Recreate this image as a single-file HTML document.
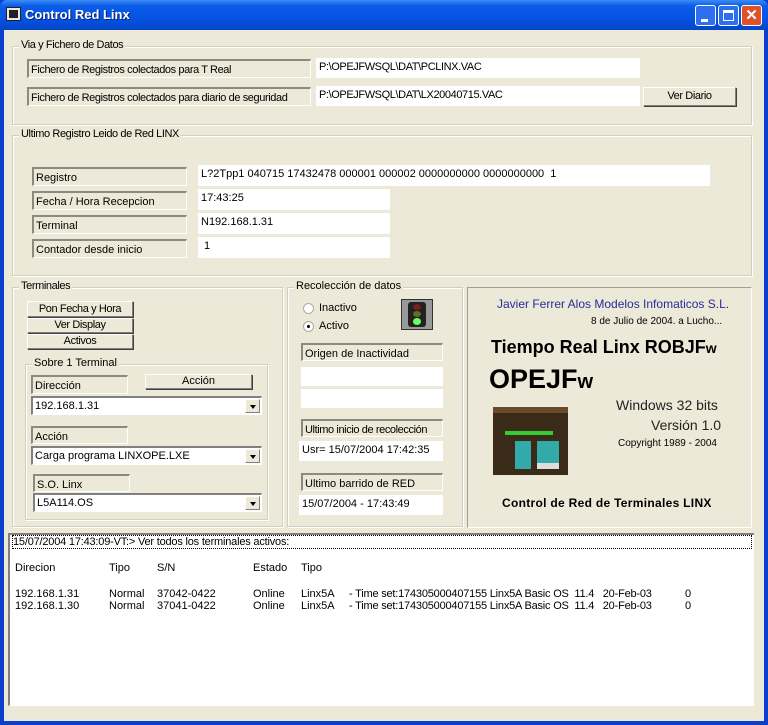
<!DOCTYPE html>
<html><head><meta charset="utf-8"><style>
*{box-sizing:border-box;margin:0;padding:0}
body{width:768px;height:725px;overflow:hidden;background:#0a3fcf;font-family:"Liberation Sans",sans-serif;font-size:11px;color:#000;position:relative}
.a{position:absolute;white-space:nowrap}
#tb{left:0;top:0;width:768px;height:30px;background:linear-gradient(#3c8cf5,#0a5ce8 20%,#0550e0 70%,#0347c4);border-radius:7px 7px 0 0}
#cl{left:4px;top:30px;width:760px;height:691px;background:#ece9d8}
.fr{position:absolute;border:1px solid #d0d0bf;box-shadow:inset 1px 1px 0 #fff,1px 1px 0 #fff}
.lg{position:absolute;background:#ece9d8;padding:0 2px;top:-8px;left:6px;color:#000;white-space:nowrap}
.lb{position:absolute;border-top:2px solid #8a8a80;border-left:2px solid #8a8a80;border-bottom:1px solid #fff;border-right:1px solid #fff;padding:2px 2px 0;line-height:14px;background:#ece9d8;white-space:nowrap;overflow:hidden}
.tx{position:absolute;background:#fff;padding:2px 3px;line-height:14px;white-space:nowrap;overflow:hidden}
.bt{position:absolute;background:#ece9d8;border:1px solid;border-color:#fff #808080 #808080 #fff;box-shadow:1px 1px 0 #404040;text-align:center;line-height:14px;white-space:nowrap}
.cb{position:absolute;background:#fff;border-top:2px solid #808080;border-left:2px solid #808080;border-bottom:1px solid #fff;border-right:1px solid #fff;padding:1px 2px;line-height:14px;white-space:nowrap}
.cb i{position:absolute;right:1px;top:1px;width:15px;height:14px;background:#ece9d8;border:1px solid;border-color:#fff #808080 #808080 #fff}
.cb i:after{content:"";position:absolute;left:4px;top:5px;border:3px solid transparent;border-top:4px solid #000;border-bottom:0}
.n{letter-spacing:-.4px}
</style></head><body>
<div id="tb" class="a"></div>
<div class="a" style="left:6px;top:7px;width:15px;height:14px;background:#e8e8e8;border:1px solid #222"><div style="margin:2px;width:9px;height:8px;background:#222"></div></div>
<div class="a" style="left:25px;top:7px;color:#fff;font-weight:bold;font-size:13px;text-shadow:1px 1px #0a246a">Control Red Linx</div>
<div class="a" style="left:695px;top:5px;width:21px;height:21px;border:1px solid #fff;border-radius:3px;background:#2d6ff0"><div style="position:absolute;left:5px;top:13px;width:7px;height:3px;background:#fff"></div></div>
<div class="a" style="left:718px;top:5px;width:21px;height:21px;border:1px solid #fff;border-radius:3px;background:#2d6ff0"><div style="position:absolute;left:4px;top:4px;width:11px;height:11px;border:1px solid #fff;border-top-width:3px"></div></div>
<div class="a" style="left:741px;top:5px;width:21px;height:21px;border:1px solid #fff;border-radius:3px;background:#e0502a;color:#fff;font-weight:bold;font-size:15px;text-align:center;line-height:19px">✕</div>
<div id="cl" class="a"></div>

<div class="fr" style="left:12px;top:46px;width:740px;height:79px"><span class="lg n">Via y Fichero de Datos</span></div>
<div class="lb n" style="left:27px;top:59px;width:284px;height:19px">Fichero de Registros colectados para T Real</div>
<div class="tx n" style="left:316px;top:58px;width:324px;height:20px">P:\OPEJFWSQL\DAT\PCLINX.VAC</div>
<div class="lb n" style="left:27px;top:87px;width:284px;height:19px">Fichero de Registros colectados para diario de seguridad</div>
<div class="tx n" style="left:316px;top:86px;width:324px;height:20px">P:\OPEJFWSQL\DAT\LX20040715.VAC</div>
<div class="bt n" style="left:643px;top:87px;width:93px;height:19px;line-height:17px">Ver Diario</div>

<div class="fr" style="left:12px;top:135px;width:740px;height:141px"><span class="lg n">Ultimo Registro Leido de Red LINX</span></div>
<div class="lb" style="left:32px;top:167px;width:155px;height:19px">Registro</div>
<div class="tx" style="left:198px;top:165px;width:512px;height:21px">L?2Tpp1 040715 17432478 000001 000002 0000000000 0000000000&nbsp; 1</div>
<div class="lb" style="left:32px;top:191px;width:155px;height:19px">Fecha / Hora Recepcion</div>
<div class="tx" style="left:198px;top:189px;width:192px;height:21px">17:43:25</div>
<div class="lb" style="left:32px;top:215px;width:155px;height:19px">Terminal</div>
<div class="tx" style="left:198px;top:213px;width:192px;height:21px">N192.168.1.31</div>
<div class="lb" style="left:32px;top:239px;width:155px;height:19px">Contador desde inicio</div>
<div class="tx" style="left:198px;top:237px;width:192px;height:21px">&nbsp;1</div>

<div class="fr" style="left:12px;top:287px;width:271px;height:240px"><span class="lg n">Terminales</span></div>
<div class="bt n" style="left:27px;top:301px;width:106px;height:16px">Pon Fecha y Hora</div>
<div class="bt n" style="left:27px;top:318px;width:106px;height:15px;line-height:13px">Ver Display</div>
<div class="bt n" style="left:27px;top:334px;width:106px;height:15px;line-height:13px">Activos</div>
<div class="fr" style="left:25px;top:364px;width:243px;height:156px"><span class="lg">Sobre 1 Terminal</span></div>
<div class="lb" style="left:31px;top:375px;width:97px;height:19px">Dirección</div>
<div class="bt" style="left:145px;top:374px;width:107px;height:15px;line-height:13px">Acción</div>
<div class="cb" style="left:31px;top:396px;width:231px;height:19px">192.168.1.31<i></i></div>
<div class="lb" style="left:31px;top:426px;width:97px;height:18px">Acción</div>
<div class="cb" style="left:31px;top:446px;width:231px;height:19px">Carga programa LINXOPE.LXE<i></i></div>
<div class="lb" style="left:33px;top:474px;width:97px;height:18px">S.O. Linx</div>
<div class="cb" style="left:33px;top:493px;width:229px;height:19px">L5A114.OS<i></i></div>

<div class="fr" style="left:287px;top:287px;width:176px;height:240px"><span class="lg">Recolección de datos</span></div>
<div class="a" style="left:303px;top:303px;width:11px;height:11px;border-radius:50%;background:#fff;border:1px solid #aaa"></div>
<div class="a" style="left:319px;top:302px">Inactivo</div>
<div class="a" style="left:303px;top:321px;width:11px;height:11px;border-radius:50%;background:#fff;border:1px solid #aaa"><div style="margin:3px;width:3px;height:3px;border-radius:50%;background:#000"></div></div>
<div class="a" style="left:319px;top:320px">Activo</div>
<div class="a" style="left:401px;top:299px;width:32px;height:31px;background:#999;border:1px solid #333;padding:2px 6px"><div style="width:18px;height:25px;background:#222;border-radius:3px;position:relative">
<div style="position:absolute;left:5px;top:2px;width:8px;height:6px;border-radius:50%;background:#7a2020"></div>
<div style="position:absolute;left:5px;top:9px;width:8px;height:6px;border-radius:50%;background:#6a6a20"></div>
<div style="position:absolute;left:5px;top:16px;width:8px;height:7px;border-radius:50%;background:#6f6"></div></div></div>
<div class="lb" style="left:301px;top:343px;width:142px;height:18px">Origen de Inactividad</div>
<div class="tx" style="left:301px;top:367px;width:142px;height:19px"></div>
<div class="tx" style="left:301px;top:389px;width:142px;height:19px"></div>
<div class="lb n" style="left:301px;top:419px;width:142px;height:18px">Ultimo inicio de recolección</div>
<div class="tx" style="left:299px;top:441px;width:144px;height:20px">Usr= 15/07/2004 17:42:35</div>
<div class="lb" style="left:301px;top:473px;width:142px;height:18px">Ultimo barrido de RED</div>
<div class="tx" style="left:299px;top:495px;width:144px;height:20px">15/07/2004 - 17:43:49</div>

<div class="a" style="left:467px;top:287px;width:285px;height:241px;border:1px solid;border-color:#a0a090 #fff #fff #a0a090"></div>
<div class="a" style="left:497px;top:297px;color:#2a2a9a;font-size:12px">Javier Ferrer Alos Modelos Infomaticos S.L.</div>
<div class="a" style="left:591px;top:316px;font-size:10px">8 de Julio de 2004. a Lucho...</div>
<div class="a" style="left:491px;top:337px;font-size:18px;font-weight:bold">Tiempo Real Linx ROBJF<span style="font-size:14px">w</span></div>
<div class="a" style="left:489px;top:364px;font-size:27px;font-weight:bold">OPEJF<span style="font-size:20px">w</span></div>
<div class="a" style="left:616px;top:397px;font-size:14px;color:#222">Windows 32 bits</div>
<div class="a" style="left:651px;top:417px;font-size:14px;color:#222">Versión 1.0</div>
<div class="a" style="left:618px;top:438px;font-size:10px">Copyright 1989 - 2004</div>
<div class="a" style="left:493px;top:407px;width:75px;height:68px;background:#3a2a18;border-top:6px solid #6a4a2a">
<div style="position:absolute;left:12px;top:18px;width:48px;height:4px;background:#3c3"></div>
<div style="position:absolute;left:22px;top:28px;width:16px;height:28px;background:#3aa"></div>
<div style="position:absolute;left:44px;top:28px;width:22px;height:28px;background:#3aa"></div>
<div style="position:absolute;left:44px;top:50px;width:22px;height:6px;background:#ddd"></div></div>
<div class="a" style="left:502px;top:496px;font-size:12px;font-weight:bold;letter-spacing:.3px">Control de Red de Terminales LINX</div>

<div class="a" style="left:8px;top:533px;width:746px;height:173px;background:#fff;border-left:2px solid #808080;border-top:2px solid #808080;border-bottom:1px solid #fff"></div>
<div class="a" style="left:12px;top:535px;width:740px;height:14px;border:1px dotted #000;line-height:12px;letter-spacing:-.2px">15/07/2004 17:43:09-VT:&gt; Ver todos los terminales activos:</div>
<div class="a" style="left:15px;top:562px">Direcion</div><div class="a" style="left:109px;top:562px">Tipo</div><div class="a" style="left:157px;top:562px">S/N</div><div class="a" style="left:253px;top:562px">Estado</div><div class="a" style="left:301px;top:562px">Tipo</div>
<div class="a" style="left:15px;top:588px">192.168.1.31</div><div class="a" style="left:109px;top:588px">Normal</div><div class="a" style="left:157px;top:588px">37042-0422</div><div class="a" style="left:253px;top:588px">Online</div><div class="a" style="left:301px;top:588px">Linx5A</div><div class="a" style="left:349px;top:588px;letter-spacing:-.2px">- Time set:174305000407155 Linx5A Basic OS&nbsp; 11.4&nbsp;&nbsp; 20-Feb-03</div><div class="a" style="left:685px;top:588px">0</div>
<div class="a" style="left:15px;top:600px">192.168.1.30</div><div class="a" style="left:109px;top:600px">Normal</div><div class="a" style="left:157px;top:600px">37041-0422</div><div class="a" style="left:253px;top:600px">Online</div><div class="a" style="left:301px;top:600px">Linx5A</div><div class="a" style="left:349px;top:600px;letter-spacing:-.2px">- Time set:174305000407155 Linx5A Basic OS&nbsp; 11.4&nbsp;&nbsp; 20-Feb-03</div><div class="a" style="left:685px;top:600px">0</div>
</body></html>
